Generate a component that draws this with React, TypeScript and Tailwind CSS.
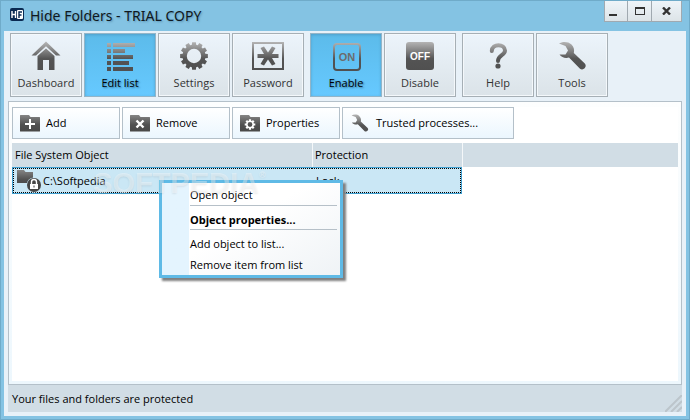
import type { ReactNode } from "react";

const gearPath = (cx: number, cy: number, outer: number, inner: number, teeth: number) => {
  const pts: string[] = [];
  const step = (Math.PI * 2) / teeth;
  for (let i = 0; i < teeth; i++) {
    const a = i * step - Math.PI / 2;
    [
      [-0.36, inner],
      [-0.26, outer],
      [0.26, outer],
      [0.36, inner],
    ].forEach(([f, r]) => {
      pts.push(`${(cx + Math.cos(a + f * step) * r).toFixed(2)} ${(cy + Math.sin(a + f * step) * r).toFixed(2)}`);
    });
  }
  return `M${pts.join("L")}Z`;
};

const circlePath = (cx: number, cy: number, r: number) =>
  `M${cx - r} ${cy}a${r} ${r} 0 1 0 ${r * 2} 0a${r} ${r} 0 1 0 ${-r * 2} 0Z`;

function Gradients() {
  return (
    <svg width="0" height="0" className="absolute" aria-hidden="true">
      <defs>
        <linearGradient id="metal" gradientUnits="userSpaceOnUse" x1="0" y1="2" x2="0" y2="30">
          <stop offset="0" stopColor="#b4b4b4" />
          <stop offset="0.6" stopColor="#545454" />
          <stop offset="1" stopColor="#505050" />
        </linearGradient>
        <linearGradient id="metalSmall" gradientUnits="userSpaceOnUse" x1="0" y1="0" x2="0" y2="18">
          <stop offset="0" stopColor="#8a8a8a" />
          <stop offset="0.6" stopColor="#505050" />
          <stop offset="1" stopColor="#484848" />
        </linearGradient>
      </defs>
    </svg>
  );
}

function Icon({ children }: { children: ReactNode }) {
  return (
    <svg width="32" height="32" viewBox="0 0 32 32" fill="url(#metal)" className="text-shadow-none" aria-hidden="true">
      {children}
    </svg>
  );
}

const wrench =
  "M3 3.5C6 1.5 12 1 15.500 4.500C18 7 18.500 10 17.800 13L28.800 23.500C31.500 26.500 27.500 31 24 28.800L13 17.500C9.500 18.500 5.500 17.500 3.500 14.500L9.500 14.500L12 10.500L9.500 6Z";

const icons: Record<string, ReactNode> = {
  Dashboard: (
    <Icon>
      <path d="M16 1.500L30.500 15.500H26L16 6.200L6 15.500H1.500Z" />
      <path d="M16 8.500L24.500 16V30H19V20H13V30H7.500V16Z" />
    </Icon>
  ),
  "Edit list": (
    <Icon>
      <path d="M3 3h4v4H3zM9 3h22v4H9zM3 9h4v4H3zM9 9h12v4H9zM3 15h4v4H3zM9 15h20v4H9zM3 21h4v4H3zM9 21h16v4H9zM3 27h4v4H3zM9 27h20v4H9z" />
    </Icon>
  ),
  Settings: (
    <Icon>
      <path fillRule="evenodd" d={gearPath(16, 16, 14, 11.5, 12) + circlePath(16, 16, 7.2)} />
    </Icon>
  ),
  Password: (
    <Icon>
      <path fillRule="evenodd" d="M0 2h32v28H0zM2 4v24h28V4z" />
      <path d="M5.500 14H12L8.500 8L12 6.500L16 12.500L20 6.500L23.500 8L20 14H26.500V18H20L23.500 24L20 25.500L16 19.500L12 25.500L8.500 24L12 18H5.500Z" />
    </Icon>
  ),
  Enable: (
    <Icon>
      <rect x="4" y="4" width="26" height="26" rx="3" fill="none" stroke="url(#metal)" strokeWidth="2" />
      <text x="17" y="21" textAnchor="middle" fill="#6c6c6c" className="font-['Liberation_Sans',sans-serif] text-[11px] font-bold">
        ON
      </text>
    </Icon>
  ),
  Disable: (
    <Icon>
      <rect x="2" y="2" width="28" height="28" rx="3" />
      <text x="16" y="20" textAnchor="middle" fill="#ffffff" className="font-['Liberation_Sans',sans-serif] text-[10px] font-bold">
        OFF
      </text>
    </Icon>
  ),
  Help: (
    <Icon>
      <path d="M9.800 11C10 3 23 3.500 23 10.500C23 15.500 16 15 16 21" fill="none" stroke="url(#metal)" strokeWidth="4" strokeLinecap="round" />
      <circle cx="16" cy="26" r="2.600" />
    </Icon>
  ),
  Tools: (
    <Icon>
      <path d={wrench} />
    </Icon>
  ),
};

const toolGroups = [
  ["Dashboard", "Edit list", "Settings", "Password"],
  ["Enable", "Disable"],
  ["Help", "Tools"],
];
const activeTools = ["Edit list", "Enable"];

function ToolButton({ label }: { label: string }) {
  const active = activeTools.includes(label);
  return (
    <button
      type="button"
      aria-pressed={active}
      className={`flex h-16 w-[72px] flex-col items-center gap-[2px] border pt-[6px] ${
        active
          ? "border-[#93b5c8] bg-linear-to-b from-[#5cbbea] to-[#66c9ff] text-black shadow-[inset_0_1px_3px_#4f9fca] text-shadow-[1px_1px_2px_#2c6d92]"
          : "border-[#a6afb5] bg-linear-to-b from-[#ecf4fb] to-[#dbe3e8] text-[#333333] shadow-[inset_0_0_0_1px_#f4f8fb]"
      }`}
    >
      {icons[label]}
      {label}
    </button>
  );
}

function Folder({ children }: { children: ReactNode }) {
  return (
    <svg width="20" height="18" viewBox="0 0 20 18" aria-hidden="true">
      <path d="M0 1.500Q0 1 .5 1H9L10.500 3H19.500Q20 3 20 3.500V17Q20 17.500 19.500 17.500H.5Q0 17.500 0 17Z" fill="url(#metalSmall)" />
      {children}
    </svg>
  );
}

const actions = [
  {
    label: "Add",
    wide: false,
    icon: (
      <Folder>
        <path d="M10 5v10M5 10h10" stroke="#ffffff" strokeWidth="2" />
      </Folder>
    ),
  },
  {
    label: "Remove",
    wide: false,
    icon: (
      <Folder>
        <path d="M6.500 6.500l7 7M13.500 6.500l-7 7" stroke="#ffffff" strokeWidth="2.400" />
      </Folder>
    ),
  },
  {
    label: "Properties",
    wide: false,
    icon: (
      <Folder>
        <path fillRule="evenodd" fill="#ffffff" d={gearPath(10, 10.5, 5.4, 4, 8) + circlePath(10, 10.5, 2.4)} />
      </Folder>
    ),
  },
  {
    label: "Trusted processes...",
    wide: true,
    icon: (
      <svg width="20" height="18" viewBox="2 1 29 29" fill="url(#metal)" aria-hidden="true">
        <path d={wrench} />
      </svg>
    ),
  },
];

function TitleBar() {
  return (
    <header className="flex h-[30px] shrink-0 items-start pr-1 pl-[5px]">
      <svg width="14" height="14" viewBox="0 0 14 14" className="mt-[7px] ml-px" aria-hidden="true">
        <rect width="14" height="13" rx="2" fill="#0a2a52" />
        <rect x="7" y="2" width="6" height="9" rx="1" fill="#ffffff" />
        <path d="M2 3v7M5.500 3v7M2 6.500h3.500" stroke="#ffffff" strokeWidth="1.400" fill="none" />
        <path d="M9 10V4h3M9 7h2.500" stroke="#0a2a52" strokeWidth="1.400" fill="none" />
      </svg>
      <h1 className="ml-[6px] flex-1 font-['Noto_Sans',sans-serif] text-[14px] leading-[30px] text-[#101820] text-shadow-[1px_1px_2px_#5c93b2]">
        Hide Folders - TRIAL COPY
      </h1>
      <div className="flex h-[21px] divide-x divide-[#a0a9b0] border border-t-0 border-[#a0a9b0] bg-linear-to-b from-[#eef4f9] to-[#dde4e8]">
        <button type="button" aria-label="Minimize" className="flex w-[23px] items-center justify-center">
          <svg width="16" height="12" viewBox="0 0 16 12" aria-hidden="true">
            <path d="M1 9h8v2H1z" fill="#333333" />
          </svg>
        </button>
        <button type="button" aria-label="Maximize" className="flex w-6 items-center justify-center">
          <svg width="10" height="8" viewBox="0 0 10 8" aria-hidden="true">
            <path fillRule="evenodd" d="M0 0h10v8H0zM1 2v5h8V2z" fill="#333333" />
          </svg>
        </button>
        <button type="button" aria-label="Close" className="flex w-[29px] items-center justify-center">
          <svg width="9" height="8" viewBox="0 0 9 8" aria-hidden="true">
            <path d="M1 .5l7 7M8 .5l-7 7" stroke="#333333" strokeWidth="2.400" />
          </svg>
        </button>
      </div>
    </header>
  );
}

function ObjectTable() {
  return (
    <table className="mt-1 w-full table-fixed border-separate border-spacing-0 text-left">
      <colgroup>
        <col className="w-[300px]" />
        <col className="w-[150px]" />
        <col />
      </colgroup>
      <thead>
        <tr className="h-6 bg-[#d1dde5]">
          <th className="pl-[3px] font-normal">File System Object</th>
          <th className="border-l border-[#f4f7f9] pl-[2px] font-normal">Protection</th>
          <td className="border-l border-[#f4f7f9]" />
        </tr>
      </thead>
      <tbody>
        <tr className="h-[27px]">
          <td className="border border-r-0 border-[#3f9fd0] bg-[#cae7f5] p-0">
            <div className="flex h-[25px] items-center border border-r-0 border-dotted border-black pl-[3px]">
              <svg width="25" height="24" viewBox="0 0 25 24" aria-hidden="true">
                <path d="M0 1H7L8.500 3H16V14H0Z" fill="url(#metalSmall)" />
                <circle cx="17" cy="16" r="7.500" fill="#cae7f5" />
                <circle cx="17" cy="16" r="7" fill="#454545" />
                <rect x="13" y="15" width="8" height="5" fill="#ffffff" />
                <path d="M14.500 15v-2a2.500 2.500 0 0 1 5 0v2" fill="none" stroke="#ffffff" strokeWidth="1.400" />
                <rect x="16.500" y="16.500" width="1" height="2" fill="#454545" />
              </svg>
              <span className="ml-px">C:\Softpedia</span>
            </div>
          </td>
          <td className="border border-l-0 border-[#3f9fd0] bg-[#cae7f5] p-0">
            <div className="flex h-[25px] items-center border border-l-0 border-dotted border-black pl-1">Lock</div>
          </td>
          <td />
        </tr>
      </tbody>
    </table>
  );
}

function ContextMenu() {
  return (
    <div
      role="menu"
      className="absolute top-[179px] left-[158px] w-[184px] border-3 border-[#5fbae6] bg-linear-to-r from-[#e4f4fe] from-[27px] to-white to-[27px] shadow-[3px_3px_2px_#808080]"
    >
      <div className="ml-[27px] bg-linear-to-br from-white from-40% to-[#eff3f6] pr-[3px] pl-px">
        <button type="button" role="menuitem" className="block h-[22px] w-full pt-[2px] text-left">
          Open object
        </button>
        <hr className="border-[#b6c0c8]" />
        <button type="button" role="menuitem" className="block h-[23px] w-full pt-1 text-left font-bold">
          Object properties...
        </button>
        <hr className="border-[#b6c0c8]" />
        <button type="button" role="menuitem" className="block h-[23px] w-full pt-1 text-left">
          Add object to list...
        </button>
        <button type="button" role="menuitem" className="block h-[22px] w-full pt-[2px] text-left">
          Remove item from list
        </button>
      </div>
    </div>
  );
}

export default function App() {
  return (
    <div className="relative flex min-h-screen w-full flex-col border border-[#6fabc9] bg-[#84c3e3] px-[3px] pb-[3px] font-['Open_Sans','Noto_Sans',sans-serif] text-[11px] leading-[18px] text-black">
      <Gradients />
      <TitleBar />
      <div className="flex flex-1 flex-col bg-[#e8f1f8] px-1 pt-[2px] pb-1">
        <nav className="flex gap-[6px] pl-[2px]">
          {toolGroups.map((group) => (
            <div key={group[0]} className="flex gap-[2px]">
              {group.map((label) => (
                <ToolButton key={label} label={label} />
              ))}
            </div>
          ))}
        </nav>
        <main className="mt-1 flex flex-1 flex-col border border-[#b4c0c9] bg-linear-to-b from-[#fdfefe] to-[#edf7fd] px-[3px] pt-[5px] pb-[3px]">
          <div className="flex-1 bg-white">
            <div className="flex gap-[2px]">
              {actions.map(({ label, wide, icon }) => (
                <button
                  key={label}
                  type="button"
                  className={`flex h-8 items-center gap-[6px] border border-[#b4c0c9] bg-linear-to-b from-white to-[#ebf6fe] pl-[7px] ${
                    wide ? "w-[172px]" : "w-[108px]"
                  }`}
                >
                  {icon}
                  {label}
                </button>
              ))}
            </div>
            <ObjectTable />
          </div>
        </main>
        <footer className="flex h-[27px] items-center justify-between bg-[#d1dde5] pl-1">
          <span>Your files and folders are protected</span>
          <svg width="17" height="17" viewBox="0 0 17 17" className="self-end" aria-hidden="true">
            <path d="M0 17L17 0M6 17L17 6M12 17L17 12" stroke="#bcc5cb" strokeWidth="2" />
          </svg>
        </footer>
      </div>
      <ContextMenu />
      <div
        aria-hidden="true"
        className="pointer-events-none absolute top-[164px] left-[92px] flex font-['Liberation_Sans',sans-serif] text-[29px] leading-9 font-bold text-white/40 text-shadow-[0_1px_2px_#00000014]"
      >
        SOFTPEDIA<span className="text-[9px] leading-5">®</span>
      </div>
    </div>
  );
}
